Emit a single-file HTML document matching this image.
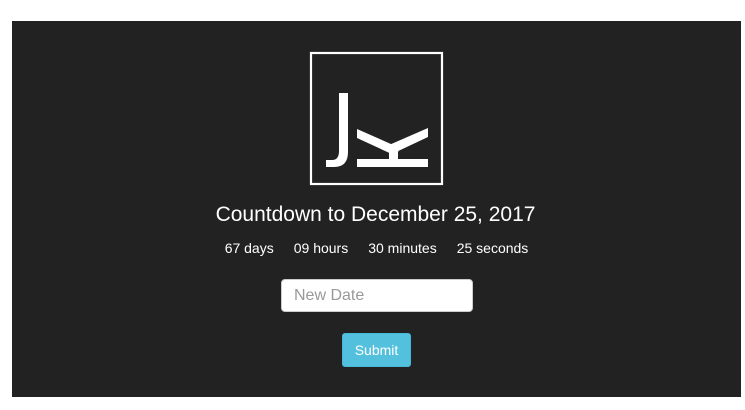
<!DOCTYPE html>
<html><head><style>
body{margin:0;background:#fff;width:745px;height:410px;position:relative;font-family:"Liberation Sans",sans-serif;overflow:hidden}
.p{position:absolute;left:12px;top:21px;width:729px;height:376px;background:#222}
.t{position:absolute;left:0;width:745px;text-align:center;color:#fff}
</style></head><body>
<div class="p"></div>
<svg style="position:absolute;left:0;top:0" width="745" height="410">
<rect x="311" y="53" width="131" height="131" fill="none" stroke="#fff" stroke-width="2.2"/>
<path d="M339 93 H348 V152 Q348 167 334 167 H326 V160 H332 Q339 160 339 151 Z" fill="#fff"/>
<polygon points="357,129 400,148 396,156 357,138" fill="#fff"/>
<polygon points="428,128 428,137 394,153 389,145" fill="#fff"/>
<rect x="389" y="148" width="9" height="12" fill="#fff"/>
<rect x="357" y="159" width="71" height="8" fill="#fff"/>
</svg>
<div class="t" style="top:203px;font-size:21px;left:3px">Countdown to December 25, 2017</div>
<div class="t" style="top:240px;font-size:14px;left:4px"><span style="margin-right:20px">67 days</span><span style="margin-right:20px">09 hours</span><span style="margin-right:20px">30 minutes</span><span>25 seconds</span></div>
<div style="position:absolute;left:281px;top:279px;width:192px;height:33px;background:#fff;border:1px solid #ccc;border-radius:4px;box-sizing:border-box;padding:0 12px;line-height:32px;color:#999;font-size:16px">New Date</div>
<div style="position:absolute;left:342px;top:333px;width:69px;height:34px;background:#53c0de;border:1px solid #46b8da;box-sizing:border-box;border-radius:3px;color:#fff;font-size:14px;text-align:center;line-height:32px">Submit</div>
</body></html>
